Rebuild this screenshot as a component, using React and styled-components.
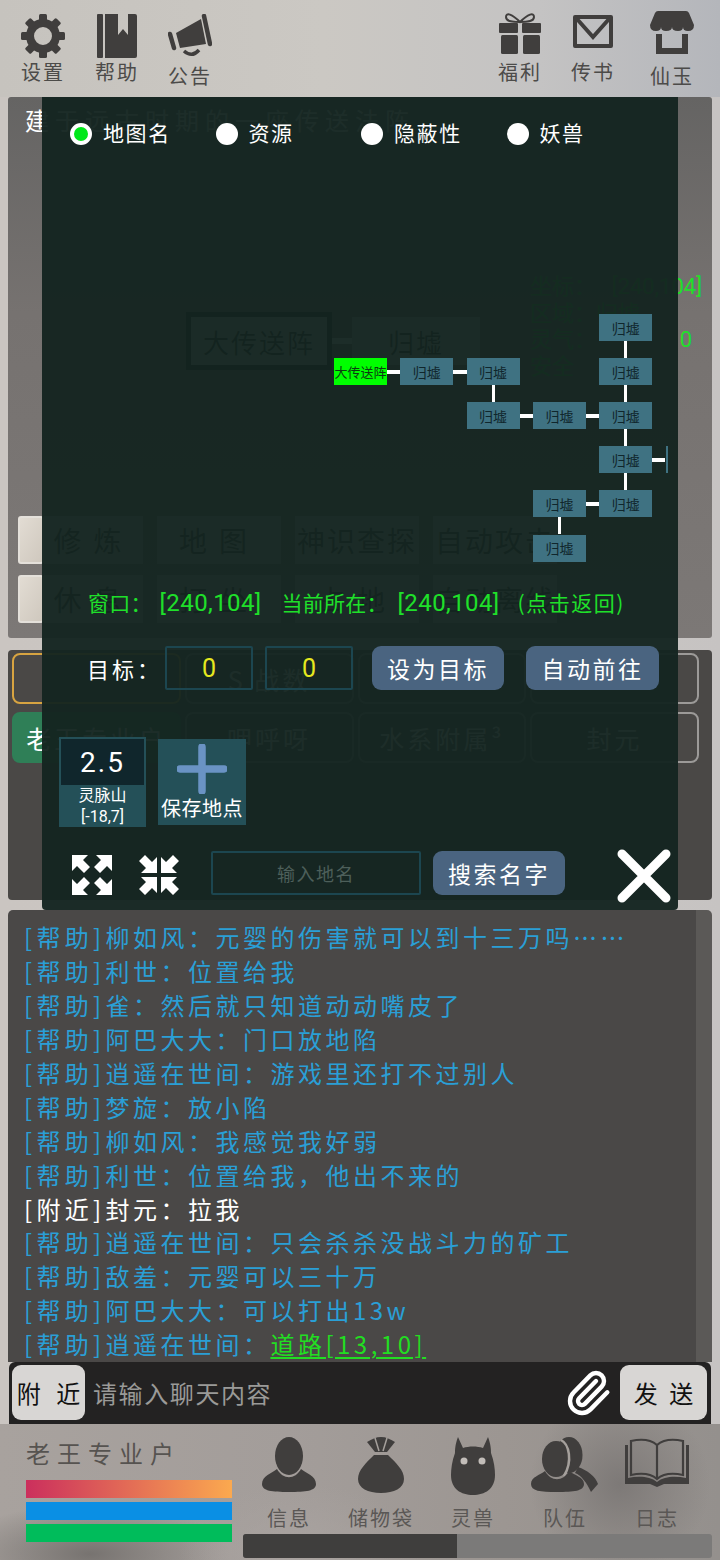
import React from "react";
import styled, { createGlobalStyle } from "styled-components";
import { Paperclip } from "lucide-react";

const ICON = "#403e3d";
const CJK = '"Noto Sans CJK SC", "Noto Sans", sans-serif';

const GlobalStyle = createGlobalStyle`
	html, body {
		margin: 0;
		padding: 0;
		background: #c8c4c0;
	}

	* {
		box-sizing: border-box;
	}

	body {
		font-family: ${CJK};
	}
`;

const Page = styled.div`
	position: relative;
	width: 720px;
	height: 1560px;
	overflow: hidden;
	background: linear-gradient(90deg, #cac5c1 0%, #cbc7c3 70%, #c6c3c2 100%);
`;

const TopBar = styled.div`
	height: 97px;
	display: flex;
	justify-content: space-between;
	padding: 11px 18px 0 13px;
	background: linear-gradient(90deg, #c6c3be 0%, #cbc8c3 45%, #c4c3c3 75%, #b4b6bb 100%);
`;

const IconGroup = styled.div`
	display: flex;
	gap: 13px;
`;

const TopItem = styled.div`
	width: 60px;
	height: 80px;
	margin-left: ${({ $shift }) => $shift || 0}px;
	display: flex;
	flex-direction: column;
	align-items: center;
`;

const TopIcon = styled.div`
	height: 47px;
	padding-top: ${({ $top }) => $top || 0}px;
	display: flex;
	align-items: ${({ $align }) => $align || "flex-end"};
`;

const TopLabel = styled.div`
	margin-top: ${({ $drop }) => ($drop ? 5 : 1)}px;
	font-size: 20px;
	line-height: 26px;
	letter-spacing: 2px;
	white-space: nowrap;
	color: #4c4b49;
`;

const StoryPanel = styled.div`
	height: 541px;
	margin: 0 8px;
	display: flex;
	flex-direction: column;
	border-radius: 3px;
	background: linear-gradient(180deg, #656463 0%, #767270 40%, #7c7876 100%);
`;

const StoryText = styled.div`
	padding: 8px 0 0 17px;
	height: 177px;
	font-size: 24px;
	line-height: 30px;
	letter-spacing: 6px;
	color: #ffffff;
`;

const MiniRow = styled.div`
	height: 106px;
	display: flex;
	justify-content: space-between;
	padding-right: 10px;
`;

const MiniMap = styled.div`
	display: flex;
	align-items: center;
	margin-left: 178px;
	height: 90px;
	margin-top: 22px;
`;

const MiniNode = styled.div`
	width: ${({ $current }) => ($current ? 146 : 128)}px;
	height: ${({ $current }) => ($current ? 58 : 48)}px;
	display: flex;
	align-items: center;
	justify-content: center;
	background: #d0d0c8;
	border: ${({ $current }) => ($current ? "5px solid #000" : "none")};
	font-size: 26px;
	letter-spacing: 2px;
	color: #111;
`;

const MiniLink = styled.div`
	width: 20px;
	height: 6px;
	background: #ffffff;
`;

const InfoColumn = styled.div`
	width: 172px;
	font-family: Roboto, ${CJK};
	font-size: 22px;
	line-height: 26.5px;
	color: #1fe02a;
`;

const InfoRow = styled.div`
	display: flex;
	justify-content: space-between;
	padding-right: ${({ $inset }) => $inset || 0}px;
`;

const ActionRows = styled.div`
	margin-top: 136px;
	display: flex;
	flex-direction: column;
	gap: 11px;
	padding-left: 10px;
`;

const ActionRow = styled.div`
	display: flex;
	height: 48px;
`;

const ActionCard = styled.div`
	width: 26px;
	height: 48px;
	border: 2px solid #e4e0da;
	border-radius: 3px;
	background: linear-gradient(120deg, #e2dcd3, #cfc8be);
`;

const ActionButton = styled.div`
	width: ${({ $wide }) => ($wide ? 124 : 99)}px;
	margin-right: 14px;
	display: flex;
	align-items: center;
	justify-content: center;
	background: #cec7bf;
	font-size: 28px;
	letter-spacing: ${({ $tight }) => ($tight ? 2 : 12)}px;
	white-space: nowrap;
	color: #1c1c1a;
`;

const PlayersPanel = styled.div`
	height: 250px;
	margin: 12px 8px 0;
	padding: 3px 13px 0 4px;
	border-radius: 4px;
	background: #4a4846;
`;

const PlayersGrid = styled.div`
	display: grid;
	grid-template-columns: repeat(4, 1fr);
	grid-auto-rows: 51px;
	gap: 8px 4px;
`;

const PlayerTab = styled.div`
	display: flex;
	align-items: center;
	justify-content: center;
	border-radius: 8px;
	border: 2px solid ${({ $tone }) => ($tone === "active" ? "#d8a441" : $tone === "self" ? "#2f7f57" : "#9c9a98")};
	background: ${({ $tone }) => ($tone === "self" ? "#2f7f57" : "transparent")};
	font-size: 25px;
	letter-spacing: 3px;
	white-space: nowrap;
	color: #ffffff;
`;

const ChatPanel = styled.div`
	position: relative;
	height: 452px;
	margin: 10px 8px 0;
	padding: 10px 0 0 16px;
	overflow: hidden;
	border-radius: 5px 5px 0 0;
	background: linear-gradient(90deg, #4a4847 0, #4a4847 688px, #5b5957 688px);
`;

const ChatLine = styled.div`
	height: 33.95px;
	font-size: 24px;
	line-height: 34px;
	letter-spacing: 3.5px;
	white-space: nowrap;
	color: ${({ $nearby }) => ($nearby ? "#ffffff" : "#2a9fd6")};
`;

const ChatTag = styled.span`
	letter-spacing: 4.3px;
`;

const ChatLink = styled.span`
	color: #22dd22;
	text-decoration: underline;
	text-underline-offset: 3px;
`;

const InputBar = styled.div`
	height: 62px;
	margin: 0 9px;
	padding: 3px 4px 4px 3px;
	display: flex;
	align-items: stretch;
	border-radius: 6px 6px 0 0;
	background: #232222;
`;

const BarButton = styled.div`
	width: ${({ $width }) => $width}px;
	display: flex;
	align-items: center;
	justify-content: center;
	border-radius: 9px;
	background: #d8d6d4;
	font-size: 24px;
	word-spacing: ${({ $spread }) => $spread}px;
	white-space: pre;
	color: #111;
`;

const ChatPlaceholder = styled.div`
	flex: 1;
	padding-left: 8px;
	display: flex;
	align-items: center;
	font-size: 24px;
	letter-spacing: 1.6px;
	color: #9a9a98;
`;

const ClipWrap = styled.div`
	width: 56px;
	display: flex;
	align-items: center;
	color: #ffffff;
`;

const BottomBar = styled.div`
	height: 136px;
	display: flex;
	padding: 0 8px 0 26px;
	background:
		radial-gradient(ellipse 120px 70px at 300px 130px, #a9a3a0 0%, transparent 100%),
		radial-gradient(ellipse 90px 90px at 620px 60px, #7d7977 0%, transparent 100%),
		radial-gradient(ellipse 140px 50px at 90px 130px, #777370 0%, transparent 100%),
		linear-gradient(90deg, #a8a29e 0%, #a39d9a 40%, #9c9692 70%, #94908d 100%);
`;

const PlayerStatus = styled.div`
	width: 217px;
`;

const PlayerName = styled.div`
	margin-top: 14px;
	font-size: 24px;
	line-height: 30px;
	letter-spacing: 7px;
	color: #565350;
`;

const StatBar = styled.div`
	width: 206px;
	height: ${({ $height }) => $height}px;
	margin-top: ${({ $gap }) => $gap}px;
	background: ${({ $fill }) => $fill};
`;

const NavColumn = styled.div`
	flex: 1;
	display: flex;
	flex-direction: column;
`;

const NavRow = styled.div`
	display: grid;
	grid-template-columns: repeat(5, 92px);
	height: 110px;
`;

const NavItem = styled.div`
	display: flex;
	flex-direction: column;
	align-items: center;
`;

const NavIcon = styled.div`
	height: 70px;
	padding-top: 13px;
	display: flex;
	align-items: flex-start;
`;

const NavLabel = styled.div`
	margin-top: 11px;
	font-size: 20px;
	line-height: 26px;
	letter-spacing: 2px;
	white-space: nowrap;
	color: #5a5755;
`;

const Progress = styled.div`
	width: 469px;
	height: 24px;
	border-radius: 3px;
	overflow: hidden;
	background: #7b7a79;
`;

const ProgressFill = styled.div`
	height: 100%;
	background: #3f3e3d;
`;

const Modal = styled.div`
	position: absolute;
	top: 97px;
	left: 42px;
	width: 636px;
	height: 813px;
	padding-top: 23px;
	border-radius: 0 0 4px 4px;
	background: rgba(20, 36, 32, 0.96);
	color: #ffffff;
`;

const RadioRow = styled.div`
	height: 28px;
	padding-left: 28px;
	display: flex;
`;

const RadioItem = styled.div`
	width: 145.5px;
	display: flex;
	align-items: center;
	gap: 11px;
`;

const RadioText = styled.div`
	padding-bottom: 4px;
	font-size: 21px;
	letter-spacing: 1.6px;
`;

const RadioDot = styled.div`
	width: 22px;
	height: 22px;
	border-radius: 50%;
	border: ${({ $on }) => ($on ? "4px solid #ffffff" : "none")};
	background: ${({ $on }) => ($on ? "#00e81a" : "#ffffff")};
`;

const MapCanvas = styled.div`
	position: relative;
	width: 626px;
	height: 440px;
	overflow: hidden;
`;

const MapNode = styled.div`
	position: absolute;
	width: 53px;
	height: 27px;
	display: flex;
	align-items: center;
	justify-content: center;
	background: ${({ $current }) => ($current ? "#00ff00" : "#3f7282")};
	font-size: ${({ $current }) => ($current ? 13 : 14)}px;
	white-space: nowrap;
	color: ${({ $current }) => ($current ? "#0d3a12" : "#10262c")};
`;

const MapLink = styled.div`
	position: absolute;
	background: #ffffff;
`;

const StatusRow = styled.div`
	height: 28px;
	padding-left: 46px;
	display: flex;
	align-items: baseline;
	font-size: 21px;
	line-height: 28px;
	white-space: nowrap;
	color: #1fe02a;
`;

const StatusCoord = styled.span`
	margin: 0 ${({ $after }) => $after}px 0 ${({ $before }) => $before}px;
	font-family: Roboto, ${CJK};
	font-size: 24px;
	letter-spacing: 0.4px;
`;

const StatusText = styled.span`
	letter-spacing: ${({ $loose }) => ($loose ? 1.5 : 0.2)}px;
`;

const TargetRow = styled.div`
	height: 44px;
	margin-top: 30px;
	padding-left: 45px;
	display: flex;
	align-items: center;
`;

const TargetLabel = styled.div`
	width: 78px;
	font-size: 22px;
	letter-spacing: 3px;
	white-space: nowrap;
`;

const CoordBox = styled.div`
	width: 88px;
	height: 44px;
	margin-right: 12px;
	display: flex;
	align-items: center;
	justify-content: center;
	border: 2px solid #1c4650;
	border-radius: 2px;
	font-family: Roboto, ${CJK};
	font-size: 25px;
	color: #e6e81e;
`;

const SlateButton = styled.div`
	width: ${({ $width }) => $width}px;
	height: 44px;
	margin-left: ${({ $offset }) => $offset}px;
	display: flex;
	align-items: center;
	justify-content: center;
	border-radius: 9px;
	background: #4a6480;
	font-size: 23px;
	letter-spacing: 2.5px;
	white-space: nowrap;
`;

const SavedRow = styled.div`
	height: 90px;
	margin-top: 47px;
	padding-left: 17px;
	display: flex;
	align-items: flex-start;
	gap: 12px;
`;

const SavedCard = styled.div`
	width: 87px;
	height: 90px;
	background: #245058;
	text-align: center;
`;

const SavedLevel = styled.div`
	height: 46px;
	margin: 2px 2px 0;
	display: flex;
	align-items: center;
	justify-content: center;
	background: #10262c;
	font-family: Roboto, ${CJK};
	font-size: 28px;
	letter-spacing: 2px;
`;

const SavedName = styled.div`
	font-family: Roboto, ${CJK};
	font-size: 16px;
	line-height: 21px;
`;

const AddCard = styled.div`
	width: 88px;
	height: 86px;
	margin-top: 2px;
	display: flex;
	flex-direction: column;
	align-items: center;
	padding-top: 5px;
	background: #245058;
`;

const AddLabel = styled.div`
	margin-top: 1px;
	font-size: 20px;
	line-height: 26px;
	letter-spacing: 0.5px;
	white-space: nowrap;
`;

const FooterRow = styled.div`
	height: 45px;
	margin-top: 23px;
	padding-left: 30px;
	display: flex;
	align-items: center;
`;

const FitIcons = styled.div`
	display: flex;
	gap: 27px;
	padding-top: 5px;
`;

const NameInput = styled.div`
	width: 210px;
	height: 44px;
	margin-left: 32px;
	display: flex;
	align-items: center;
	justify-content: center;
	border: 2px solid #1c4650;
	border-radius: 2px;
	font-size: 18px;
	letter-spacing: 1.5px;
	color: #4d5f5a;
`;

const CloseButton = styled.div`
	margin-left: 52px;
	margin-top: 6px;
	display: flex;
`;

const GearIcon = () => (
	<svg width="44" height="44" viewBox="0 0 44 44">
		<circle cx="22" cy="22" r="13" fill="none" stroke={ICON} strokeWidth="8" />
		{[0, 45, 90, 135, 180, 225, 270, 315].map((angle) => (
			<rect key={angle} x="18" y="0" width="8" height="9" rx="1.5" fill={ICON} transform={`rotate(${angle} 22 22)`} />
		))}
	</svg>
);

const BookmarkIcon = () => (
	<svg width="40" height="44" viewBox="0 0 40 44">
		<rect x="0" y="0" width="6" height="44" rx="1" fill={ICON} />
		<path d="M8 0H21V21L26 15L31 21V0H38Q40 0 40 2V42Q40 44 38 44H8Z" fill={ICON} />
	</svg>
);

const MegaphoneIcon = () => (
	<svg width="44" height="44" viewBox="0 0 44 44">
		<path d="M2 20L6 34" stroke={ICON} strokeWidth="4.5" strokeLinecap="round" />
		<path d="M8 19L33 5L38 30L12 34Z" fill={ICON} />
		<path d="M36 2L42 30" stroke={ICON} strokeWidth="4.5" strokeLinecap="round" />
		<path d="M16 37Q24 44 31 36" fill="none" stroke={ICON} strokeWidth="3.5" />
	</svg>
);

const GiftIcon = () => (
	<svg width="42" height="44" viewBox="0 0 42 44">
		<path d="M21 11C13 3 7 1 7 6C7 11 15 11 21 11C27 11 35 11 35 6C35 1 29 3 21 11Z" fill="none" stroke={ICON} strokeWidth="2" />
		<rect x="0" y="12" width="19" height="10" rx="1" fill={ICON} />
		<rect x="23" y="12" width="19" height="10" rx="1" fill={ICON} />
		<rect x="2" y="24" width="17" height="19" rx="1.5" fill={ICON} />
		<rect x="24" y="24" width="17" height="19" rx="1.5" fill={ICON} />
	</svg>
);

const MailIcon = () => (
	<svg width="40" height="33" viewBox="0 0 40 33">
		<rect x="2" y="2" width="36" height="29" fill="none" stroke={ICON} strokeWidth="4" strokeLinejoin="round" />
		<path d="M4 4L20 22L36 4" fill="none" stroke={ICON} strokeWidth="4" />
	</svg>
);

const ShopIcon = () => (
	<svg width="44" height="43" viewBox="0 0 44 43">
		<path d="M8 0H36Q38 0 39 2L44 14Q44 20 38 20Q33 20 33 16Q33 20 28 20Q22 20 22 16Q22 20 16 20Q11 20 11 16Q11 20 6 20Q0 20 0 14L5 2Q6 0 8 0Z" fill={ICON} />
		<path d="M9 23V40H35V23" fill="none" stroke={ICON} strokeWidth="6" />
	</svg>
);

const PersonIcon = () => (
	<svg width="54" height="56" viewBox="0 0 54 56">
		<ellipse cx="27" cy="19" rx="14" ry="19" fill={ICON} />
		<path d="M0 47C0 39 10 36 15 32C21 43 33 43 39 32C44 36 54 39 54 47C54 54 44 55 27 55C10 55 0 54 0 47Z" fill={ICON} />
	</svg>
);

const BagIcon = () => (
	<svg width="46" height="56" viewBox="0 0 46 56">
		<path d="M23 0C18 0 14 2 9 5L17 15H29L37 5C32 2 28 0 23 0Z" fill={ICON} />
		<path d="M17 1L21 14M29 1L25 14" stroke="#a5a09c" strokeWidth="1.5" />
		<path d="M16 18H30C38 26 46 33 46 42C46 51 36 56 23 56C10 56 0 51 0 42C0 33 8 26 16 18Z" fill={ICON} />
	</svg>
);

const BeastIcon = () => (
	<svg width="44" height="58" viewBox="0 0 44 58">
		<path d="M7 0L12 11C18 9 26 9 32 11L37 0C40 8 40 13 40 16C43 24 44 32 44 38C44 52 34 58 22 58C10 58 0 52 0 38C0 32 1 24 4 16C4 13 4 8 7 0Z" fill={ICON} />
		<circle cx="13" cy="24" r="3.5" fill="#c2bdb9" />
		<circle cx="31" cy="24" r="3.5" fill="#c2bdb9" />
	</svg>
);

const TeamIcon = () => (
	<svg width="68" height="56" viewBox="0 0 68 56">
		<ellipse cx="38" cy="18" rx="13.5" ry="18" fill={ICON} />
		<path d="M47 30C56 33 65 40 67 47L60 55C56 46 50 38 44 36Z" fill={ICON} />
		<ellipse cx="25" cy="22" rx="14" ry="18" fill={ICON} />
		<path d="M30 3C38 7 42 24 33 39" fill="none" stroke="#a5a09c" strokeWidth="2.5" />
		<path d="M0 47C0 40 9 38 14 34C20 45 32 45 38 34C43 38 53 40 53 47C53 54 43 55 26 55C9 55 0 54 0 47Z" fill={ICON} />
	</svg>
);

const BookIcon = () => (
	<svg width="66" height="50" viewBox="0 0 66 50">
		<g fill="none" stroke={ICON} strokeWidth="2.2">
			<path d="M33 8C26 2 16 2 7 4V38C16 36 26 36 33 42C40 36 50 36 59 38V4C50 2 40 2 33 8Z" />
			<path d="M33 8V42" />
		</g>
		<path d="M1 8H4V41C14 39 26 39 33 45C40 39 52 39 62 41V8H65V47H40L33 50L26 47H1Z" fill={ICON} />
	</svg>
);

const CORNERS = [
	{ x: 0, y: 0, r: 0 },
	{ x: 40, y: 0, r: 90 },
	{ x: 40, y: 40, r: 180 },
	{ x: 0, y: 40, r: 270 },
];

const FitIcon = ({ inward }) => (
	<svg width="40" height="40" viewBox="0 0 40 40">
		{CORNERS.map(({ x, y, r }) => (
			<g key={r} transform={`translate(${x} ${y}) rotate(${r})`}>
				<path
					d="M0 0H16L11 5L18 12L12 18L5 11L0 16Z"
					fill="#ffffff"
					transform={inward ? "rotate(180 9 9)" : undefined}
				/>
			</g>
		))}
	</svg>
);

const PlusIcon = () => (
	<svg width="50" height="50" viewBox="0 0 50 50">
		<path d="M25 3V47M3 25H47" stroke="#6a93c4" strokeWidth="7.5" strokeLinecap="round" />
	</svg>
);

const CloseIcon = () => (
	<svg width="54" height="54" viewBox="0 0 54 54">
		<path d="M5 5L49 49M49 5L5 49" stroke="#ffffff" strokeWidth="9" strokeLinecap="round" />
	</svg>
);

const CHAT = [
	["帮助", "柳如风：元婴的伤害就可以到十三万吗……"],
	["帮助", "利世：位置给我"],
	["帮助", "雀：然后就只知道动动嘴皮了"],
	["帮助", "阿巴大大：门口放地陷"],
	["帮助", "逍遥在世间：游戏里还打不过别人"],
	["帮助", "梦旋：放小陷"],
	["帮助", "柳如风：我感觉我好弱"],
	["帮助", "利世：位置给我，他出不来的"],
	["附近", "封元：拉我"],
	["帮助", "逍遥在世间：只会杀杀没战斗力的矿工"],
	["帮助", "敌羞：元婴可以三十万"],
	["帮助", "阿巴大大：可以打出13w"],
];

const STEP_X = 66.3;
const STEP_Y = 44.1;
const NODE_W = 53;
const NODE_H = 27;
const MAP_X = 292;
const MAP_Y = 166;

// col / row on the map grid, row 0 is the topmost node
const NODES = [
	{ col: 0, row: 1, current: true },
	{ col: 1, row: 1 },
	{ col: 2, row: 1 },
	{ col: 2, row: 2 },
	{ col: 3, row: 2 },
	{ col: 4, row: 2 },
	{ col: 4, row: 0 },
	{ col: 4, row: 1 },
	{ col: 4, row: 3 },
	{ col: 4, row: 4 },
	{ col: 3, row: 4 },
	{ col: 3, row: 5 },
	{ col: 5, row: 3 },
];

const LINKS = [
	[0, 1, 1, 1],
	[1, 1, 2, 1],
	[2, 1, 2, 2],
	[2, 2, 3, 2],
	[3, 2, 4, 2],
	[4, 0, 4, 1],
	[4, 1, 4, 2],
	[4, 2, 4, 3],
	[4, 3, 4, 4],
	[4, 4, 3, 4],
	[3, 4, 3, 5],
	[4, 3, 5, 3],
];

const linkStyle = ([c1, r1, c2, r2]) => {
	const left = MAP_X + Math.min(c1, c2) * STEP_X;
	const top = MAP_Y + Math.min(r1, r2) * STEP_Y;
	if (r1 === r2) {
		return { left: left + NODE_W, top: top + 11.5, width: STEP_X - NODE_W, height: 4 };
	}
	return { left: left + 25, top: top + NODE_H, width: 3, height: STEP_Y - NODE_H };
};

const App = () => (
	<Page>
		<GlobalStyle />
		<TopBar>
			<IconGroup>
				<TopItem><TopIcon><GearIcon /></TopIcon><TopLabel>设置</TopLabel></TopItem>
				<TopItem $shift={1}><TopIcon><BookmarkIcon /></TopIcon><TopLabel>帮助</TopLabel></TopItem>
				<TopItem><TopIcon><MegaphoneIcon /></TopIcon><TopLabel $drop>公告</TopLabel></TopItem>
			</IconGroup>
			<IconGroup>
				<TopItem><TopIcon $align="flex-start"><GiftIcon /></TopIcon><TopLabel>福利</TopLabel></TopItem>
				<TopItem><TopIcon $align="flex-start" $top={4}><MailIcon /></TopIcon><TopLabel>传书</TopLabel></TopItem>
				<TopItem $shift={6}><TopIcon $align="flex-start"><ShopIcon /></TopIcon><TopLabel $drop>仙玉</TopLabel></TopItem>
			</IconGroup>
		</TopBar>

		<StoryPanel>
			<StoryText>建于远古时期的一座传送法阵</StoryText>
			<MiniRow>
				<MiniMap>
					<MiniNode $current>大传送阵</MiniNode>
					<MiniLink />
					<MiniNode>归墟</MiniNode>
				</MiniMap>
				<InfoColumn>
					<InfoRow><span>坐标：</span><span>[240,104]</span></InfoRow>
					<InfoRow><span>区域：归墟</span></InfoRow>
					<InfoRow $inset={10}><span>灵气：</span><span>0</span></InfoRow>
					<InfoRow><span>安全</span></InfoRow>
				</InfoColumn>
			</MiniRow>
			<ActionRows>
				<ActionRow>
					<ActionCard />
					<ActionButton>修炼</ActionButton>
					<ActionButton $wide>地图</ActionButton>
					<ActionButton $wide $tight>神识查探</ActionButton>
					<ActionButton $wide $tight>自动攻击</ActionButton>
				</ActionRow>
				<ActionRow>
					<ActionCard />
					<ActionButton>休息</ActionButton>
					<ActionButton $wide>打坐</ActionButton>
					<ActionButton $wide>占地</ActionButton>
					<ActionButton $wide $tight>自动离线</ActionButton>
				</ActionRow>
			</ActionRows>
		</StoryPanel>

		<PlayersPanel>
			<PlayersGrid>
				<PlayerTab $tone="active" />
				<PlayerTab>S 战数</PlayerTab>
				<PlayerTab />
				<PlayerTab />
				<PlayerTab $tone="self">老王专业户</PlayerTab>
				<PlayerTab>呷呼呀</PlayerTab>
				<PlayerTab>水系附属³</PlayerTab>
				<PlayerTab>封元</PlayerTab>
			</PlayersGrid>
		</PlayersPanel>

		<ChatPanel>
			{CHAT.map(([channel, text], index) => (
				<ChatLine key={index} $nearby={channel === "附近"}><ChatTag>[{channel}]</ChatTag>{text}</ChatLine>
			))}
			<ChatLine><ChatTag>[帮助]</ChatTag>逍遥在世间：<ChatLink>道路[13,10]</ChatLink></ChatLine>
		</ChatPanel>

		<InputBar>
			<BarButton $width={73} $spread={10}>附 近</BarButton>
			<ChatPlaceholder>请输入聊天内容</ChatPlaceholder>
			<ClipWrap><Paperclip size={48} strokeWidth={2.2} /></ClipWrap>
			<BarButton $width={87} $spread={6}>发 送</BarButton>
		</InputBar>

		<BottomBar>
			<PlayerStatus>
				<PlayerName>老王专业户</PlayerName>
				<StatBar $height={18} $gap={12} $fill="linear-gradient(90deg, #cb2f5d, #fba94f)" />
				<StatBar $height={18} $gap={4} $fill="#0a8fe4" />
				<StatBar $height={18} $gap={4} $fill="#00bc5b" />
			</PlayerStatus>
			<NavColumn>
				<NavRow>
					<NavItem><NavIcon><PersonIcon /></NavIcon><NavLabel>信息</NavLabel></NavItem>
					<NavItem><NavIcon><BagIcon /></NavIcon><NavLabel>储物袋</NavLabel></NavItem>
					<NavItem><NavIcon><BeastIcon /></NavIcon><NavLabel>灵兽</NavLabel></NavItem>
					<NavItem><NavIcon><TeamIcon /></NavIcon><NavLabel>队伍</NavLabel></NavItem>
					<NavItem><NavIcon><BookIcon /></NavIcon><NavLabel>日志</NavLabel></NavItem>
				</NavRow>
				<Progress><ProgressFill style={{ width: `${(214 / 469) * 100}%` }} /></Progress>
			</NavColumn>
		</BottomBar>

		<Modal>
			<RadioRow>
				<RadioItem><RadioDot $on /><RadioText>地图名</RadioText></RadioItem>
				<RadioItem><RadioDot /><RadioText>资源</RadioText></RadioItem>
				<RadioItem><RadioDot /><RadioText>隐蔽性</RadioText></RadioItem>
				<RadioItem><RadioDot /><RadioText>妖兽</RadioText></RadioItem>
			</RadioRow>
			<MapCanvas>
				{LINKS.map((link) => (
					<MapLink key={link.join("-")} style={linkStyle(link)} />
				))}
				{NODES.map(({ col, row, current }) => (
					<MapNode
						key={`${col}-${row}`}
						$current={current}
						style={{ left: MAP_X + col * STEP_X, top: MAP_Y + row * STEP_Y }}
					>
						{current ? "大传送阵" : "归墟"}
					</MapNode>
				))}
			</MapCanvas>
			<StatusRow>
				<StatusText>窗口：</StatusText>
				<StatusCoord $before={8} $after={20}>[240,104]</StatusCoord>
				<StatusText>当前所在：</StatusText>
				<StatusCoord $before={10} $after={18}>[240,104]</StatusCoord>
				<StatusText $loose>(点击返回)</StatusText>
			</StatusRow>
			<TargetRow>
				<TargetLabel>目标：</TargetLabel>
				<CoordBox>0</CoordBox>
				<CoordBox>0</CoordBox>
				<SlateButton $width={132} $offset={7}>设为目标</SlateButton>
				<SlateButton $width={133} $offset={22}>自动前往</SlateButton>
			</TargetRow>
			<SavedRow>
				<SavedCard>
					<SavedLevel>2.5</SavedLevel>
					<SavedName>灵脉山<br />[-18,7]</SavedName>
				</SavedCard>
				<AddCard>
					<PlusIcon />
					<AddLabel>保存地点</AddLabel>
				</AddCard>
			</SavedRow>
			<FooterRow>
				<FitIcons>
					<FitIcon />
					<FitIcon inward />
				</FitIcons>
				<NameInput>输入地名</NameInput>
				<SlateButton $width={132} $offset={12}>搜索名字</SlateButton>
				<CloseButton><CloseIcon /></CloseButton>
			</FooterRow>
		</Modal>
	</Page>
);

export default App;
